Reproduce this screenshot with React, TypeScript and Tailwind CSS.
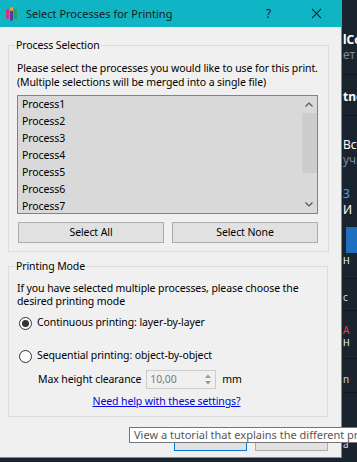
import React from "react";

const items = ["Process1", "Process2", "Process3", "Process4", "Process5", "Process6", "Process7"];

function Logo() {
  return (
    <svg width="11" height="14" viewBox="0 0 11 14" className="shrink-0">
      <rect x="0" y="2" width="3" height="10" rx="1.2" fill="#d6327e" />
      <rect x="4" y="0" width="3" height="14" rx="1.4" fill="#4b3fb0" />
      <rect x="8" y="2" width="3" height="10" rx="1.2" fill="#2f9b57" />
      <rect x="4" y="0" width="3" height="4" rx="1" fill="#e8a42a" />
    </svg>
  );
}

function Radio({ checked }: { checked?: boolean }) {
  return (
    <span className="w-[13px] h-[13px] rounded-full border border-[#333333] bg-white flex items-center justify-center shrink-0">
      {checked && <span className="w-[7px] h-[7px] rounded-full bg-[#333333]" />}
    </span>
  );
}

export default function App() {
  return (
    <div
      className="w-[357px] h-[462px] relative overflow-hidden flex bg-[#1a242f] text-[10.5px] tracking-[-0.1px] text-black whitespace-nowrap"
      style={{ fontFamily: '"Noto Sans", "Open Sans", sans-serif' }}
    >
      {/* Dialog */}
      <div className="w-[342px] h-[458px] shrink-0 flex flex-col bg-[#f0f0f0] border-r border-b border-[#18b4c4]">
        {/* Title bar */}
        <div className="h-[27px] shrink-0 bg-[#0fb5c5] flex items-center pl-[6px]">
          <Logo />
          <span className="ml-[9px] text-[11px] tracking-normal leading-[16px] text-[#1a1a1a]">Select Processes for Printing</span>
          <span className="ml-auto mr-[40px] text-[12px] text-[#1a1a1a]">?</span>
          <svg width="11" height="11" viewBox="0 0 12 12" className="mr-[19px]">
            <path d="M1 1L11 11M11 1L1 11" stroke="#1a1a1a" strokeWidth="1.1" />
          </svg>
        </div>

        {/* Body */}
        <div className="flex flex-col pl-[8px] pr-[13px]">
          <fieldset className="mt-[11px] border border-[#dcdcdc] h-[214px]">
            <legend className="ml-[6px] px-[1px] leading-[15px]">Process Selection</legend>
            <div className="pl-[8px] pr-[10px] pt-[8px] flex flex-col">
              <p className="leading-[14px]">
                Please select the processes you would like to use for this print.
                <br />
                (Multiple selections will be merged into a single file)
              </p>
              <div className="mt-[6px] h-[119px] border border-[#828282] bg-[#d9d9d9] flex overflow-hidden">
                <div className="flex-1 flex flex-col">
                  {items.map((it) => (
                    <div key={it} className="h-[17px] shrink-0 leading-[17px] pl-[4px]">
                      {it}
                    </div>
                  ))}
                </div>
                <div className="w-[16px] flex flex-col items-center bg-[#d9d9d9]">
                  <div className="h-[17px] flex items-center justify-center">
                    <svg width="8" height="5" viewBox="0 0 8 5">
                      <path d="M0.5 4.5L4 1L7.5 4.5" fill="none" stroke="#555" strokeWidth="1.2" />
                    </svg>
                  </div>
                  <div className="w-[15px] h-[60px] bg-[#cdcdcd]" />
                  <div className="flex-1" />
                  <div className="h-[17px] flex items-center justify-center">
                    <svg width="8" height="5" viewBox="0 0 8 5">
                      <path d="M0.5 0.5L4 4L7.5 0.5" fill="none" stroke="#555" strokeWidth="1.2" />
                    </svg>
                  </div>
                </div>
              </div>
              <div className="mt-[8px] flex gap-[8px] pl-[1px]">
                <button className="w-[146px] h-[21px] bg-[#e1e1e1] border border-[#adadad] leading-[19px]">Select All</button>
                <button className="w-[146px] h-[21px] bg-[#e1e1e1] border border-[#adadad] leading-[19px]">Select None</button>
              </div>
            </div>
          </fieldset>

          <fieldset className="mt-[7px] border border-[#dcdcdc] h-[158px]">
            <legend className="ml-[6px] px-[1px] leading-[15px]">Printing Mode</legend>
            <div className="pl-[8px] pr-[10px] pt-[8px] flex flex-col">
              <p className="leading-[13px]">
                If you have selected multiple processes, please choose the
                <br />
                desired printing mode
              </p>
              <div className="mt-[6px] flex items-center gap-[5px] pl-[2px] h-[18px]">
                <Radio checked />
                <span>Continuous printing: layer-by-layer</span>
              </div>
              <div className="mt-[15px] flex items-center gap-[5px] pl-[2px] h-[18px]">
                <Radio />
                <span>Sequential printing: object-by-object</span>
              </div>
              <div className="mt-[5px] flex items-center pl-[21px] h-[19px]">
                <span>Max height clearance</span>
                <div className="ml-[5px] w-[70px] h-[19px] border border-[#cccccc] bg-[#f0f0f0] flex items-center">
                  <span className="pl-[3px] text-[#7a7a7a] flex-1">10,00</span>
                  <div className="w-[13px] h-full flex flex-col items-center justify-center gap-[3px] mr-[1px]">
                    <svg width="6" height="4" viewBox="0 0 6 4"><path d="M0 4L3 0.5L6 4Z" fill="#9a9a9a" /></svg>
                    <svg width="6" height="4" viewBox="0 0 6 4"><path d="M0 0L3 3.5L6 0Z" fill="#9a9a9a" /></svg>
                  </div>
                </div>
                <span className="ml-[6px]">mm</span>
              </div>
              <div className="mt-[5px] flex justify-center pr-[1px]">
                <span className="text-[#0000e6] underline leading-[14px]">Need help with these settings?</span>
              </div>
            </div>
          </fieldset>

          {/* Bottom buttons (partly hidden by tooltip) */}
          <div className="mt-[14px] flex pl-[166px] gap-[8px]">
            <div className="w-[73px] h-[20px] border border-[#0078d7] bg-[#e1e1e1]" />
            <div className="w-[73px] h-[20px] border border-[#adadad] bg-[#e1e1e1]" />
          </div>
        </div>
      </div>

      {/* Right background panel */}
      <div className="flex-1 flex flex-col overflow-hidden text-[12px] tracking-normal leading-[15px] pl-[1px]">
        <div className="h-[32px]" />
        <div className="font-bold text-white">lCo</div>
        <div className="text-[#7d8a97]">ет</div>
        <div className="h-[13px] border-b border-[#101820]" />
        <div className="h-[14px]" />
        <div className="font-bold text-white">tne</div>
        <div className="h-[12px] border-b border-[#101820]" />
        <div className="h-[21px]" />
        <div className="text-white">Всё</div>
        <div className="text-[#7d8a97]">уча</div>
        <div className="h-[19px]" />
        <div className="text-[#4a9be0] leading-[16px]">З</div>
        <div className="text-white leading-[16px]">И</div>
        <div className="h-[9px]" />
        <div className="h-[26px] ml-[3px] bg-[#1f6fc0]" />
        <div className="text-white text-[9px] leading-[12px] mt-[2px]">Н</div>
        <div className="h-[12px] border-b border-[#101820]" />
        <div className="h-[12px]" />
        <div className="text-[#cfd6dd] text-[10px] leading-[12px]">c</div>
        <div className="h-[8px] border-b border-[#101820]" />
        <div className="h-[13px]" />
        <div className="text-[#e04040] text-[10px] leading-[13px]">A</div>
        <div className="text-white text-[9px] leading-[12px]">H</div>
        <div className="h-[10px] border-b border-[#101820]" />
        <div className="h-[14px]" />
        <div className="text-[#cfd6dd] text-[10px] leading-[12px]">n</div>
        <div className="h-[8px] border-b border-[#101820]" />
        <div className="h-[44px]" />
        <div className="text-[#cfd6dd] text-[10px]">a</div>
      </div>

      {/* Tooltip */}
      <div className="absolute left-[129px] top-[427px] h-[16px] w-[260px] bg-white border border-[#767676] text-[#575757] text-[11px] tracking-normal leading-[14px] pl-[4px]">
        View a tutorial that explains the different printing modes
      </div>
    </div>
  );
}
